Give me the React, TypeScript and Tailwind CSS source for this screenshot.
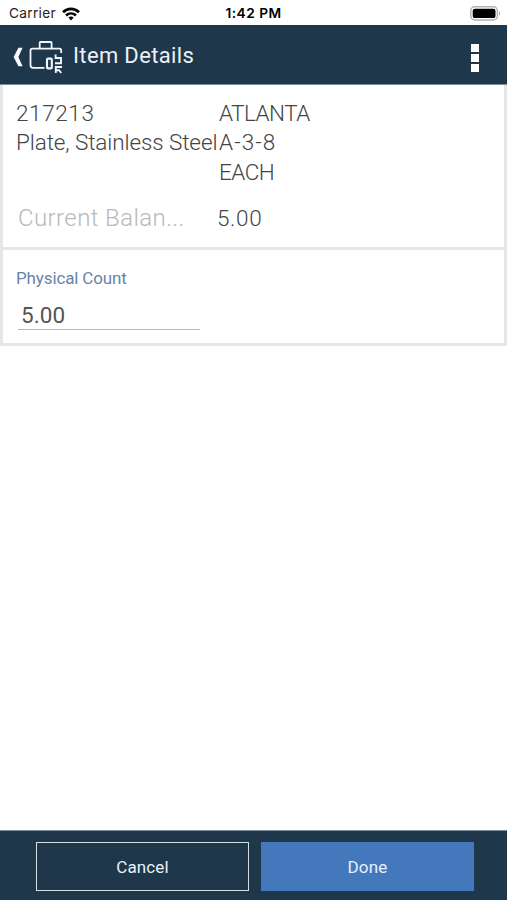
import React from "react";

function WifiIcon() {
  return (
    <svg width="18" height="14" viewBox="0 0 18 14" fill="none" stroke="#050505" strokeWidth="2.6">
      <path d="M1 5.2C5.6.8 12.4.8 17 5.2" />
      <path d="M4 8.5c2.9-2.7 7.1-2.7 10 0" />
      <path d="M6.4 10.6c1.5-1.4 3.7-1.4 5.2 0L9 13.4z" fill="#050505" stroke="none" />
    </svg>
  );
}

function BatteryIcon() {
  return (
    <svg width="31" height="15" viewBox="0 0 31 15">
      <rect x="0.8" y="0.8" width="26.6" height="13.2" rx="4" fill="#fff" stroke="#b3b3b3" strokeWidth="1.5" />
      <rect x="2.7" y="2.7" width="22.8" height="9.4" rx="2.2" fill="#000" />
      <path d="M29 5.2c1.6.7 1.6 3.7 0 4.4z" fill="#a6a6a6" />
    </svg>
  );
}

function InventoryIcon() {
  return (
    <svg width="34" height="34" viewBox="0 0 34 34" fill="none" stroke="#f3f7fa" strokeWidth="1.8">
      <path d="M10.7 8V2.8Q10.7 2 11.5 2H21.8Q22.6 2 22.6 2.8V8" />
      <path d="M15.5 27.8H4Q1.5 27.8 1.5 25.3V10.5Q1.5 8.6 3.5 8.6H30.5Q32.2 8.6 32.2 10.5V13" />
      <rect x="18" y="18.6" width="4.8" height="9.8" rx="1" strokeWidth="2.1" />
      <path d="M26.6 14.4V18H32V23.2H26" strokeWidth="1.9" />
      <path d="M33 27H26.8V33M26.8 30.2H30L32.3 33" strokeWidth="1.9" />
    </svg>
  );
}

export default function App() {
  return (
    <main className="flex h-[900px] w-[507px] flex-col overflow-hidden bg-white font-['Roboto',sans-serif] text-[#444]">
      <header>
        <div className="grid h-[25px] grid-cols-3 items-center bg-white pt-[2px] text-black">
          <div className="flex items-center gap-[6px] pl-[9px]">
            <span className="font-['Inter',sans-serif] text-[13.7px] leading-none tracking-[0.3px] text-[#222]">Carrier</span>
            <WifiIcon />
          </div>
          <span className="text-center font-['Inter',sans-serif] text-[13.7px] leading-none font-semibold tracking-[0.5px]">1:42 PM</span>
          <div className="flex justify-end pr-[6px]"><BatteryIcon /></div>
        </div>
        <div className="flex h-[60px] items-center border-b border-[#7d909f] bg-[#1f374b] pl-[13px] text-[#eaf1f7]">
          <svg width="10" height="20" viewBox="0 0 10 20" className="mt-[4px]" fill="#f7fbff">
            <path d="M5.4.8H9.6L5.4 10 9.6 19.2H5.4L.6 10z" />
          </svg>
          <div className="mt-[4px] ml-[6px]"><InventoryIcon /></div>
          <h1 className="mt-[3px] ml-[10px] grow text-[22px] leading-none tracking-[0.35px]">Item Details</h1>
          <div className="mt-[6px] mr-[28px] flex flex-col gap-[2px]">
            <i className="size-2 bg-white" />
            <i className="size-2 bg-white" />
            <i className="size-2 bg-white" />
          </div>
        </div>
      </header>

      <section className="flex h-[165px] flex-col border-x-[3px] border-b-[3px] border-[#e6e6e6] pt-[14px] pl-[13px] text-[22.5px] leading-[29.3px] font-light">
        <div className="grid grid-cols-[203px_1fr] whitespace-nowrap">
          <span className="tracking-[0.6px]">217213</span>
          <span className="tracking-[-0.55px]">ATLANTA</span>
          <span className="tracking-[-0.1px]">Plate, Stainless Steel</span>
          <span className="tracking-[1.1px]">A-3-8</span>
          <span className="col-start-2 tracking-[-0.5px]">EACH</span>
        </div>
        <div className="mt-[17px] grid grid-cols-[199px_1fr] pl-[2px]">
          <span className="text-[24px] tracking-[0.4px] text-[#b9b9b9]">Current Balan...</span>
          <span className="tracking-[0.6px]">5.00</span>
        </div>
      </section>

      <section className="h-[96px] border-x-[3px] border-b-[3px] border-[#e6e6e6] pt-[18px] pl-[13px]">
        <label htmlFor="physical-count" className="block text-[17px] leading-[20px] tracking-[-0.13px] text-[#6685a5]">Physical Count</label>
        <input id="physical-count" defaultValue="5.00" className="mt-[11px] ml-[2px] block h-[31px] w-[182px] border-b border-[#b7b7b7] pt-[2px] pl-[3px] text-[22.5px] leading-none tracking-[0.1px] text-[#555] outline-none" />
      </section>

      <footer className="mt-auto flex h-[70px] gap-[12px] border-t border-[#7d909f] bg-[#1f374b] pt-[11px] pl-[36px] text-[17px] tracking-[0.15px] text-[#e8f1fb]">
        <button className="h-[49px] w-[213px] border-[1.5px] border-[#d5e0e6] pt-[2px]">Cancel</button>
        <button className="h-[49px] w-[213px] bg-[#4478bd] pt-[2px]">Done</button>
      </footer>
    </main>
  );
}
